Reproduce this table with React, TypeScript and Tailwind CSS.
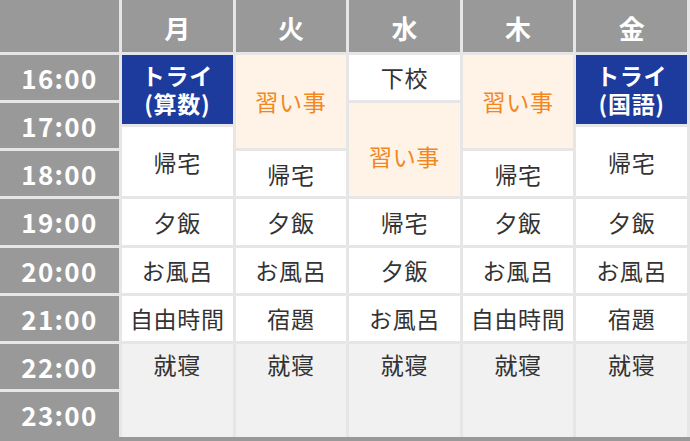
const days = ["月", "火", "水", "木", "金"];
const times = ["16:00", "17:00", "18:00", "19:00", "20:00", "21:00", "22:00", "23:00"];

type Kind = "plain" | "try" | "lesson" | "sleep";
type Slot = { label: string; start: number; span: number; kind: Kind; extra?: string };

// start = half-hour index from 16:00 (0..15)
const schedule: Slot[][] = [
	[
		{ label: "トライ\n(算数)", start: 0, span: 3, kind: "try" },
		{ label: "帰宅", start: 3, span: 3, kind: "plain" },
		{ label: "夕飯", start: 6, span: 2, kind: "plain" },
		{ label: "お風呂", start: 8, span: 2, kind: "plain" },
		{ label: "自由時間", start: 10, span: 2, kind: "plain" },
		{ label: "就寝", start: 12, span: 4, kind: "sleep" },
	],
	[
		{ label: "習い事", start: 0, span: 4, kind: "lesson" },
		{ label: "帰宅", start: 4, span: 2, kind: "plain" },
		{ label: "夕飯", start: 6, span: 2, kind: "plain" },
		{ label: "お風呂", start: 8, span: 2, kind: "plain" },
		{ label: "宿題", start: 10, span: 2, kind: "plain" },
		{ label: "就寝", start: 12, span: 4, kind: "sleep" },
	],
	[
		{ label: "下校", start: 0, span: 2, kind: "plain" },
		{ label: "習い事", start: 2, span: 4, kind: "lesson", extra: "pt-[12px]" },
		{ label: "帰宅", start: 6, span: 2, kind: "plain" },
		{ label: "夕飯", start: 8, span: 2, kind: "plain" },
		{ label: "お風呂", start: 10, span: 2, kind: "plain" },
		{ label: "就寝", start: 12, span: 4, kind: "sleep" },
	],
	[
		{ label: "習い事", start: 0, span: 4, kind: "lesson" },
		{ label: "帰宅", start: 4, span: 2, kind: "plain" },
		{ label: "夕飯", start: 6, span: 2, kind: "plain" },
		{ label: "お風呂", start: 8, span: 2, kind: "plain" },
		{ label: "自由時間", start: 10, span: 2, kind: "plain" },
		{ label: "就寝", start: 12, span: 4, kind: "sleep" },
	],
	[
		{ label: "トライ\n(国語)", start: 0, span: 3, kind: "try" },
		{ label: "帰宅", start: 3, span: 3, kind: "plain" },
		{ label: "夕飯", start: 6, span: 2, kind: "plain" },
		{ label: "お風呂", start: 8, span: 2, kind: "plain" },
		{ label: "宿題", start: 10, span: 2, kind: "plain" },
		{ label: "就寝", start: 12, span: 4, kind: "sleep" },
	],
];

const rowStart: Record<number, string> = {
	0: "row-start-2",
	1: "row-start-3",
	2: "row-start-4",
	3: "row-start-5",
	4: "row-start-6",
	5: "row-start-7",
	6: "row-start-8",
	7: "row-start-9",
	8: "row-start-10",
	9: "row-start-11",
	10: "row-start-12",
	11: "row-start-13",
	12: "row-start-14",
	13: "row-start-15",
	14: "row-start-16",
	15: "row-start-17",
};

const rowSpan: Record<number, string> = {
	2: "row-span-2",
	3: "row-span-3",
	4: "row-span-4",
};

const colStart = ["col-start-2", "col-start-3", "col-start-4", "col-start-5", "col-start-6"];

const kindClass: Record<Kind, string> = {
	plain: "bg-white text-[#333] items-center",
	try: "bg-[#1d3a9d] text-white font-bold leading-[1.2] text-[22px] items-center",
	lesson: "bg-[#fef3e6] text-[#f2871f] items-center",
	sleep: "bg-[#f1f1f1] text-[#333] items-start pt-[3px]",
};

export default function App() {
	return (
		<div
			className="grid h-[441px] w-[690px] grid-cols-[119px_repeat(5,minmax(0,1fr))] grid-rows-[52px_repeat(16,minmax(0,1fr))] gap-[3px] border-b-4 border-[#999] bg-[#e6e6e6] pr-[3px]"
			style={{ fontFamily: '"Noto Sans CJK JP", "Noto Sans", sans-serif' }}
		>
			<div className="col-start-1 row-start-1 bg-[#999]" />
			{days.map((d, i) => (
				<div
					key={d}
					className={`${colStart[i]} row-start-1 flex items-center justify-center bg-[#999] pt-[2px] text-[26px] font-bold text-white`}
				>
					{d}
				</div>
			))}

			{times.map((t, i) => (
				<div
					key={t}
					className={`col-start-1 ${rowStart[i * 2]} row-span-2 flex items-center justify-center bg-[#999] text-[26px] font-bold tracking-[0.05em] text-white`}
				>
					{t}
				</div>
			))}

			{schedule.map((col, ci) =>
				col.map((s) => (
					<div
						key={`${ci}-${s.start}`}
						className={`${colStart[ci]} ${rowStart[s.start]} ${rowSpan[s.span]} flex justify-center whitespace-pre-line text-center text-[23px] tracking-[0.03em] ${kindClass[s.kind]} ${s.extra ?? ""}`}
					>
						{s.label}
					</div>
				))
			)}
		</div>
	);
}
